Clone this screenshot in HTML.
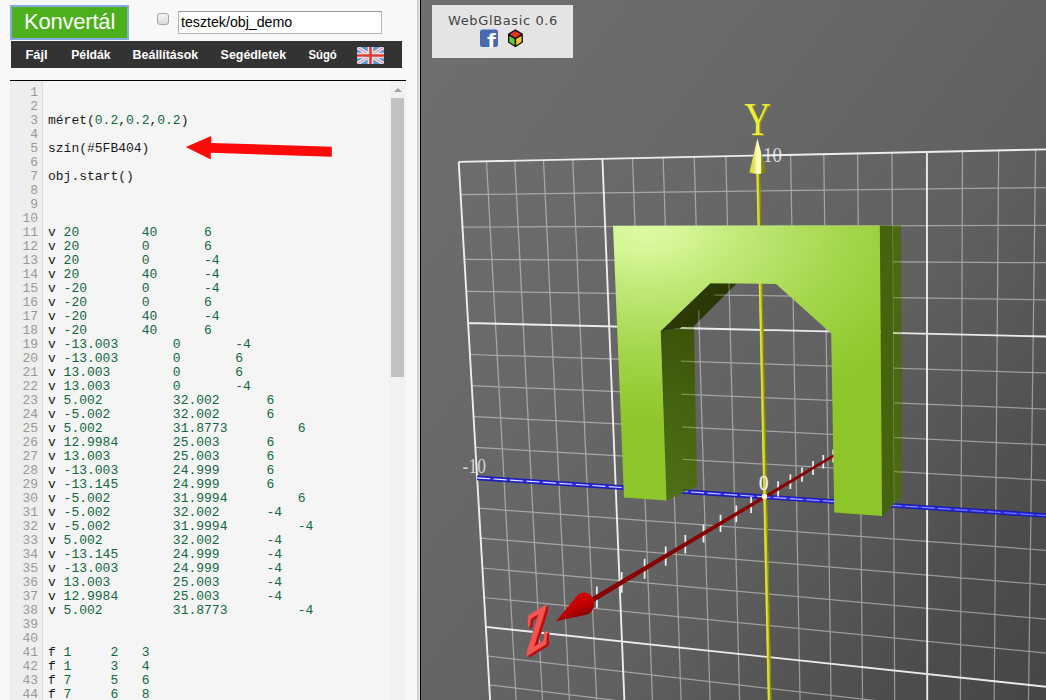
<!DOCTYPE html>
<html lang="hu">
<head>
<meta charset="utf-8">
<title>WebGlBasic</title>
<style>
html,body{margin:0;padding:0;}
body{width:1046px;height:700px;overflow:hidden;position:relative;background:#f8f8f8;font-family:"Liberation Sans",sans-serif;}
#left{position:absolute;left:0;top:0;width:417px;height:700px;background:#f8f8f8;overflow:hidden;}
#btn{position:absolute;left:10px;top:5px;width:119px;height:35px;box-sizing:border-box;border:2px solid #86a9e4;background:#4caf1c;color:#fff;font:22px "Liberation Sans",sans-serif;line-height:30px;text-align:center;padding:0;letter-spacing:-0.2px;}
#chk{position:absolute;left:157px;top:13px;width:12px;height:12px;box-sizing:border-box;border:1px solid #a5a5a5;border-radius:3px;background:linear-gradient(#f4f4f4,#dcdcdc);}
#inp{position:absolute;left:178px;top:11px;width:204px;height:23px;box-sizing:border-box;border:1px solid #b4b4b4;border-top-color:#9a9a9a;background:#fff;font:14.2px "Liberation Sans",sans-serif;line-height:20px;padding:0 0 0 2px;color:#000;white-space:nowrap;}
#menu{position:absolute;left:11px;top:40.6px;width:391px;height:27.9px;background:#333;}
#menu span{position:absolute;top:0;line-height:27px;color:#fff;font:bold 13px "DejaVu Sans Condensed","DejaVu Sans","Liberation Sans",sans-serif;line-height:27px;white-space:nowrap;}
#flag{position:absolute;left:346px;top:6px;}
#ed{position:absolute;left:10px;top:80px;width:396px;height:620px;border-top:1px solid #000;background:#f5f5f5;overflow:hidden;}
#gut{position:absolute;left:0;top:0;width:32px;height:620px;background:#eeeeee;border-right:1px solid #dddddd;box-sizing:content-box;}
pre{margin:0;font:13px/14px "Liberation Mono",monospace;position:absolute;top:5px;}
#nums{left:0;width:28px;text-align:right;color:#999;}
#code{left:38px;color:#1a1a1a;}
#code i{font-style:normal;color:#116644;}
#sb{position:absolute;left:379px;top:0;width:17px;height:620px;background:#f1f1f1;}
#sb b{position:absolute;left:2px;top:17px;width:13px;height:279px;background:#c1c1c1;}
#sb s{position:absolute;left:4.5px;top:7px;width:0;height:0;border-left:4px solid transparent;border-right:4px solid transparent;border-bottom:4px solid #a3a3a3;}
#div{position:absolute;left:417px;top:0;width:4px;height:700px;background:linear-gradient(90deg,#c4c4c4 0,#e6e6e6 60%,#e6e6e6 72%,#000 76%,#000 100%);}
#cv{position:absolute;left:421px;top:0;}
#info{position:absolute;left:432px;top:5px;width:141px;height:53px;background:#e4e4e4;color:#444;font:13px "DejaVu Sans","Liberation Sans",sans-serif;letter-spacing:0.62px;text-align:center;}
#info div{margin-top:8px;line-height:16px;padding-left:1px;}
</style>
</head>
<body>
<div id="left">
  <div id="btn">Konvertál</div>
  <div id="chk"></div>
  <div id="inp">tesztek/obj_demo</div>
  <div id="menu">
    <svg style="position:absolute;left:0;top:0" width="391" height="28" viewBox="11 41 391 28" font-family="'Liberation Sans',sans-serif" font-weight="bold" font-size="13.2" fill="#fff">
      <text x="25.4" y="59.4" textLength="22.2" lengthAdjust="spacingAndGlyphs">Fájl</text>
      <text x="71.2" y="59.4" textLength="39.4" lengthAdjust="spacingAndGlyphs">Példák</text>
      <text x="132.6" y="59.4" textLength="65.6" lengthAdjust="spacingAndGlyphs">Beállítások</text>
      <text x="220.6" y="59.4" textLength="65.6" lengthAdjust="spacingAndGlyphs">Segédletek</text>
      <text x="308.4" y="59.4" textLength="28.4" lengthAdjust="spacingAndGlyphs">Súgó</text>
    </svg>
    <svg id="flag" width="27" height="17" viewBox="0 0 27 17">
      <rect width="27" height="17" fill="#5c98d6"/>
      <path d="M0,0 L27,17 M27,0 L0,17" stroke="#ece4ee" stroke-width="3.6"/>
      <path d="M0,0 L27,17 M27,0 L0,17" stroke="#dc7c84" stroke-width="1"/>
      <path d="M13.5,0 V17 M0,8.5 H27" stroke="#f2dfe4" stroke-width="5.6"/>
      <path d="M13.5,0 V17 M0,8.5 H27" stroke="#e03c38" stroke-width="2.6"/>
    </svg>
  </div>
  <div id="ed">
    <div id="gut"><pre id="nums">1
2
3
4
5
6
7
8
9
10
11
12
13
14
15
16
17
18
19
20
21
22
23
24
25
26
27
28
29
30
31
32
33
34
35
36
37
38
39
40
41
42
43
44
45</pre></div>
    <pre id="code">


méret(<i>0.2</i>,<i>0.2</i>,<i>0.2</i>)

szín(#5FB404)

obj.start()



v <i>20</i>        <i>40</i>      <i>6</i>
v <i>20</i>        <i>0</i>       <i>6</i>
v <i>20</i>        <i>0</i>       <i>-4</i>
v <i>20</i>        <i>40</i>      <i>-4</i>
v <i>-20</i>       <i>0</i>       <i>-4</i>
v <i>-20</i>       <i>0</i>       <i>6</i>
v <i>-20</i>       <i>40</i>      <i>-4</i>
v <i>-20</i>       <i>40</i>      <i>6</i>
v <i>-13.003</i>       <i>0</i>       <i>-4</i>
v <i>-13.003</i>       <i>0</i>       <i>6</i>
v <i>13.003</i>        <i>0</i>       <i>6</i>
v <i>13.003</i>        <i>0</i>       <i>-4</i>
v <i>5.002</i>         <i>32.002</i>      <i>6</i>
v <i>-5.002</i>        <i>32.002</i>      <i>6</i>
v <i>5.002</i>         <i>31.8773</i>         <i>6</i>
v <i>12.9984</i>       <i>25.003</i>      <i>6</i>
v <i>13.003</i>        <i>25.003</i>      <i>6</i>
v <i>-13.003</i>       <i>24.999</i>      <i>6</i>
v <i>-13.145</i>       <i>24.999</i>      <i>6</i>
v <i>-5.002</i>        <i>31.9994</i>         <i>6</i>
v <i>-5.002</i>        <i>32.002</i>      <i>-4</i>
v <i>-5.002</i>        <i>31.9994</i>         <i>-4</i>
v <i>5.002</i>         <i>32.002</i>      <i>-4</i>
v <i>-13.145</i>       <i>24.999</i>      <i>-4</i>
v <i>-13.003</i>       <i>24.999</i>      <i>-4</i>
v <i>13.003</i>        <i>25.003</i>      <i>-4</i>
v <i>12.9984</i>       <i>25.003</i>      <i>-4</i>
v <i>5.002</i>         <i>31.8773</i>         <i>-4</i>


f <i>1</i>     <i>2</i>   <i>3</i>
f <i>1</i>     <i>3</i>   <i>4</i>
f <i>7</i>     <i>5</i>   <i>6</i>
f <i>7</i>     <i>6</i>   <i>8</i>
</pre>
    <svg style="position:absolute;left:0;top:0" width="396" height="620" viewBox="10 81 396 620">
      <polygon points="185.8,147 211.3,136 211.3,142.9 331.8,146.7 331.8,156.7 210.8,152.7 210.8,159.6" fill="#ff0a0a"/>
    </svg>
    <div id="sb"><s></s><b></b></div>
  </div>
</div>
<div id="div"></div>
<svg id="cv" width="625" height="700" viewBox="421 0 625 700">
  <defs>
    <linearGradient id="bg" gradientUnits="userSpaceOnUse" x1="421" y1="0" x2="1154" y2="558">
      <stop offset="0" stop-color="#6f6f6f"/><stop offset="0.22" stop-color="#6b6b6b"/><stop offset="0.46" stop-color="#656565"/><stop offset="0.6" stop-color="#616161"/><stop offset="0.72" stop-color="#585858"/><stop offset="0.86" stop-color="#4d4d4d"/><stop offset="1" stop-color="#464646"/>
    </linearGradient>
    <radialGradient id="ff" gradientUnits="userSpaceOnUse" cx="0" cy="0" r="1" gradientTransform="translate(645,228) scale(335,205)">
      <stop offset="0" stop-color="#dcfca2"/><stop offset="0.12" stop-color="#d4f696"/><stop offset="0.3" stop-color="#c0e876"/><stop offset="0.6" stop-color="#a4d64c"/><stop offset="0.85" stop-color="#94ca32"/><stop offset="1" stop-color="#8ec528"/>
    </radialGradient>
    <linearGradient id="yc" gradientUnits="userSpaceOnUse" x1="749" y1="0" x2="767" y2="0">
      <stop offset="0" stop-color="#cfcf40"/><stop offset="0.3" stop-color="#e6e660"/><stop offset="0.45" stop-color="#ffffc4"/><stop offset="0.66" stop-color="#ffffb0"/><stop offset="0.7" stop-color="#8a8a18"/><stop offset="1" stop-color="#74740c"/>
    </linearGradient>
    <linearGradient id="ya" gradientUnits="objectBoundingBox" x1="0" y1="0" x2="1" y2="0">
      <stop offset="0" stop-color="#e8e840"/><stop offset="0.5" stop-color="#d2d224"/><stop offset="1" stop-color="#86860c"/>
    </linearGradient>
    <linearGradient id="zc" gradientUnits="userSpaceOnUse" x1="572" y1="596" x2="582" y2="618">
      <stop offset="0" stop-color="#d40000"/><stop offset="0.55" stop-color="#c00000"/><stop offset="1" stop-color="#7e0000"/>
    </linearGradient>
    <linearGradient id="dash" gradientUnits="userSpaceOnUse" x1="476" y1="0" x2="1046" y2="0">
      <stop offset="0" stop-color="#f0f0ff" stop-opacity="1"/><stop offset="0.5" stop-color="#d8d8ff" stop-opacity="0.85"/><stop offset="1" stop-color="#a0a0ff" stop-opacity="0.55"/>
    </linearGradient>
    <linearGradient id="wl" gradientUnits="userSpaceOnUse" x1="0" y1="328" x2="0" y2="495">
      <stop offset="0" stop-color="#3b550a"/><stop offset="0.5" stop-color="#456410"/><stop offset="1" stop-color="#4d6f15"/>
    </linearGradient>
    <clipPath id="back">
      <polygon points="726,283.4 736.6,283.5 694,326 697,486 683.7,490.5 680,328.5"/>
      <polygon points="892.5,225.6 901,225.8 901.6,496.5 893.8,504.3"/>
    </clipPath>
    <g id="grid">
      <path d="M486.5,161.3 L520.2,774 M492.5,742 L1096.2,825.5 M514.8,160.7 L546.5,777.9 M490.9,713.5 L1097,792.7 M543.5,160.1 L573.3,781.8 M489.2,684.9 L1097.7,759.6 M572.7,159.5 L600.4,785.7 M487.5,656 L1098.5,726.2 M632.5,158.2 L655.9,793.8 M484.1,597.5 L1100,658.4 M663.1,157.6 L684.3,798 M482.4,568 L1100.7,624.1 M694.2,156.9 L713,802.2 M480.7,538.2 L1101.5,589.5 M725.8,156.2 L742.3,806.5 M478.9,508.2 L1102.3,554.5 M790.6,154.9 L802,815.2 M475.4,447.4 L1103.8,483.7 M823.8,154.1 L832.6,819.7 M473.6,416.7 L1104.6,447.8 M857.6,153.4 L863.7,824.2 M471.8,385.7 L1105.4,411.5 M892,152.7 L895.3,828.8 M469.9,354.5 L1106.2,374.9 M962.5,151.2 L959.9,838.2 M466.3,291.3 L1107.9,300.7 M998.7,150.4 L993,843.1 M464.4,259.4 L1108.7,263.1 M1035.6,149.7 L1026.6,848 M462.5,227.1 L1109.6,225.1 M1073.1,148.9 L1060.8,853 M460.6,194.6 L1110.4,186.8" stroke="#ffffff" stroke-opacity="0.42" stroke-width="1.25" fill="none"/>
      <path d="M458.7,161.9 L494.2,770.2 M494.2,770.2 L1095.5,858 M602.4,158.8 L628,789.8 M485.8,626.9 L1099.2,692.4 M757.9,155.5 L771.9,810.8 M477.1,477.9 L1103,519.3 M926.9,152 L927.3,833.5 M468.1,323 L1107.1,338 M1111.3,148 L1095.5,858 M458.7,161.9 L1111.3,148" stroke="#ffffff" stroke-opacity="0.88" stroke-width="1.9" fill="none"/>
    </g>
    <g id="xaxis">
      <path d="M477.1,477.9 L1103,519.3" stroke="#1a1ab4" stroke-width="4.6" fill="none"/>
      <path d="M477.1,477.9 L1103,519.3" stroke="#2c2ce6" stroke-width="2.4" fill="none"/>
      <path d="M477.1,477.9 L1103,519.3" stroke="url(#dash)" stroke-width="1.1" stroke-dasharray="13 3.5" fill="none"/>
    </g>
  </defs>
  <rect x="421" y="0" width="625" height="700" fill="url(#bg)"/>
  <g font-family="'Liberation Serif',serif">
    <text x="763" y="161.7" font-size="21" fill="#dcdcdc" textLength="19" lengthAdjust="spacingAndGlyphs">10</text>
    <text x="462.6" y="472.6" font-size="20" fill="#d4d4d4" textLength="23.4" lengthAdjust="spacingAndGlyphs">-10</text>
  </g>
  <use href="#grid"/>
  <use href="#xaxis"/>
  <!-- z axis -->
  <g id="zaxis">
    <path d="M851.4,438.8 V451.3 M842.5,444 V456.8 M833.2,449.4 V462.5 M823.3,455.1 V468.6 M813,461.1 V475 M802,467.5 V481.7 M790.4,474.2 V488.9 M778.1,481.3 V496.5 M751.1,497 V513.1 M736.3,505.6 V522.2 M720.5,514.7 V531.9 M703.5,524.6 V542.4 M685.3,535.1 V553.6 M665.7,546.5 V565.7 M644.6,558.8 V578.7 M621.7,572 V592.8 M596.9,586.4 V608.1" stroke="#f2f2f2" stroke-width="1.7" fill="none"/>
    <polygon points="852,446.1 590.8,603.8 588.2,599.5 850.8,444.1" fill="#870000"/>
  </g>
  <!-- y axis -->
  <path d="M758.1,172 L769.5,700" stroke="#cece22" stroke-width="3.6" fill="none"/>
  <path d="M759.5,172 L770.9,700" stroke="#85850e" stroke-width="1.3" fill="none"/>
  <path d="M757.1,172 L768.5,700" stroke="#e4e444" stroke-width="1" fill="none"/>
  <circle cx="764.4" cy="496.5" r="2.8" fill="#f6f6ec"/>
  <!-- object -->
  <polygon points="879.8,225.4 901,225.8 901.6,496.5 882,516" fill="#45640d"/>
  <polygon points="892.5,225.6 901,225.8 901.6,496.5 893.8,504.3" fill="#4b6a16"/>
  <polygon points="660.7,331.1 694,326 697,486 666.5,500.4" fill="url(#wl)"/>
  <polygon points="710.4,283.3 736.6,283.5 694,326 660.7,331.1" fill="#2b3906"/>
  <g clip-path="url(#back)"><use href="#grid" opacity="0.75"/><use href="#xaxis"/></g>
  <polygon points="613,225.8 879.8,225.4 882,516 834.3,512.5 831.2,333.6 776.1,283.9 710.4,283.3 660.7,331.1 666.5,500.4 624,497.5" fill="url(#ff)"/>
  <!-- Y cone + labels -->
  <path d="M757.4,138.5 L749.3,172.6 Q757.9,175.4 766.5,172.6 Z" fill="url(#yc)"/>
  <g font-family="'Liberation Serif',serif">
    <text transform="translate(744.2,135.3) scale(0.81,1)" font-size="45.4" fill="#8a8a14" x="1.6" y="0.4">Y</text>
    <text transform="translate(744.2,135.3) scale(0.81,1)" font-size="45.4" fill="#ecec3c">Y</text>
    <text x="759" y="490.4" font-size="21" fill="#f4f4f4" stroke="#f4f4f4" stroke-width="0.3" textLength="9.4" lengthAdjust="spacingAndGlyphs">0</text>
    <text transform="matrix(0.58,-0.36,0,1,528,657.4)" font-size="58" font-weight="bold" fill="#b01010" stroke="#b01010" stroke-width="2.4" stroke-linejoin="round">Z</text>
    <text transform="matrix(0.58,-0.36,0,1,525.6,656)" font-size="58" font-weight="bold" fill="#f25555" stroke="#f25555" stroke-width="2" stroke-linejoin="round">Z</text>
  </g>
  <!-- z cone -->
  <path d="M555.9,621.2 L578.6,594 Q588,589.6 593.4,598.6 Q596.2,609 588.4,614.3 Z" fill="url(#zc)"/>
</svg>
<div id="info"><div>WebGlBasic 0.6</div>
  <svg width="44" height="19" viewBox="480 28.5 44 19" style="display:block;margin:0 auto 0 48px">
    <rect x="480" y="29" width="18" height="17.6" rx="2.4" fill="#4a68ad"/>
    <text x="485.6" y="47.4" font-family="'Liberation Sans',sans-serif" font-weight="bold" font-size="21" fill="#fff" transform="translate(-120,0) scale(1.25,1)">f</text>
    <polygon points="515.4,28.7 522.9,33.2 522.9,42.1 515.4,46.7 508,42.1 508,33.2" fill="#111"/>
    <polygon points="515.4,30.4 521.1,33.8 515.4,37.3 509.7,33.8" fill="#e8302c"/>
    <polygon points="509.3,35.4 514.6,38.6 514.6,44.7 509.3,41.4" fill="#62c83a"/>
    <polygon points="521.5,35.4 516.2,38.6 516.2,44.7 521.5,41.4" fill="#f2c638"/>
  </svg>
</div>
</body>
</html>
